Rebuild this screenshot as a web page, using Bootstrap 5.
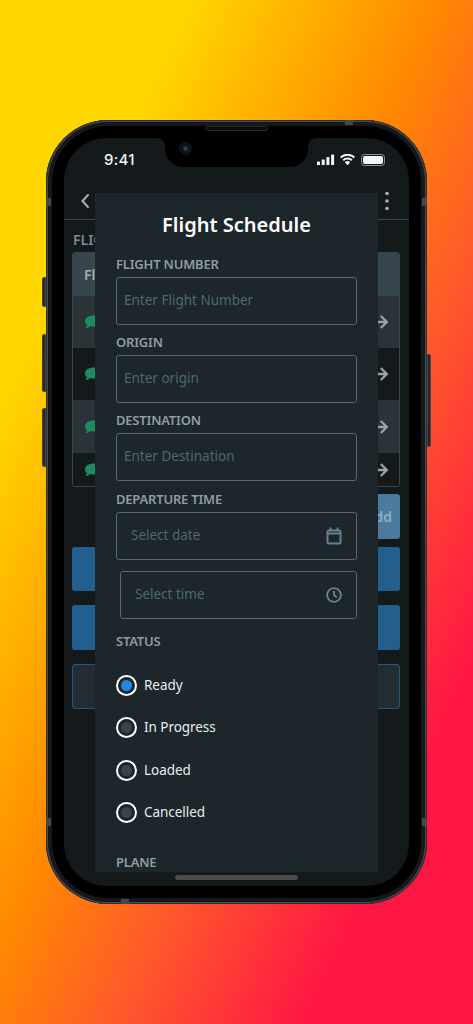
<!DOCTYPE html>
<html lang="en">
<head>
<meta charset="utf-8">
<title>Flight Schedule</title>
<link rel="stylesheet" href="https://cdn.jsdelivr.net/npm/bootstrap@5.3.0/dist/css/bootstrap.min.css">
<style>
html,body{height:1024px;overflow:hidden}
body{background:linear-gradient(to bottom right,#ffd600 20%,#ff8a00 46%,#ff5a2a 62%,#ff1744 82%);font-family:"Noto Sans","Open Sans",sans-serif;padding-top:120px}
.handset{width:381px;height:784px;border-radius:62px;background:#000;box-shadow:inset 0 0 0 1px #2e3034,inset 0 0 0 2px #4a4c50,inset 0 0 0 6px #17181b;padding:18px;position:relative}
.side-key{position:absolute;width:4px;background:#26282c;border:1px solid #44464b}
.key-a{left:-4px;top:157px;height:30px;border-radius:2px 0 0 2px}
.key-b{left:-4px;top:214px;height:58px;border-radius:2px 0 0 2px}
.key-c{left:-4px;top:288px;height:59px;border-radius:2px 0 0 2px}
.key-d{right:-4px;top:234px;height:93px;border-radius:0 2px 2px 0}
.band{position:absolute;background:#45484e}
.band-t{left:299px;top:0;width:8px;height:5px}
.band-b{left:75px;bottom:0;width:8px;height:5px}
.band-l1{left:0;top:78px;width:5px;height:8px}
.band-r1{right:0;top:78px;width:5px;height:8px}
.band-l2{left:0;top:698px;width:5px;height:8px}
.band-r2{right:0;top:698px;width:5px;height:8px}
.speaker{position:absolute;left:159px;top:6px;width:63px;height:5px;border-radius:3px;background:#0a0a0b;border:1px solid #2a2b2e}
.display{height:748px;border-radius:42px;background:#14191c;overflow:hidden;position:relative;color:#fff}
.cutout{position:absolute;left:101px;top:0;width:143px;height:29px;background:#000;border-radius:0 0 18px 18px}
.cutout::before,.cutout::after{content:"";position:absolute;top:0;width:8px;height:8px}
.cutout::before{left:-8px;background:radial-gradient(circle at 0 100%,transparent 7.5px,#000 8px)}
.cutout::after{right:-8px;background:radial-gradient(circle at 100% 100%,transparent 7.5px,#000 8px)}
.lens{position:absolute;left:14px;top:4px;width:13px;height:13px;border-radius:50%;background:radial-gradient(circle,#26405a 0 1.500px,#0e1316 3px)}
.status-row{height:44px;padding:10px 24px 0 40px}
.clock{font-family:"Inter",sans-serif;font-size:15px;font-weight:500;letter-spacing:.3px;color:#f2f4f4;line-height:24px}
.status-ico{margin-top:6px}
.top-row{height:38px;border-bottom:1px solid #3b4448;padding:0 19px 0 16px}
.head-label{font-size:14px;font-weight:600;color:#7d8c94;line-height:20px;margin:10px 0 2px 9px}
.sched-card{margin:0 9px 0 8px;height:235px;background:#14191c;border:1px solid #37464d;border-radius:3px;overflow:hidden}
.sched-head{height:44px;background:#37464d;color:#a3afb5;font-weight:600;font-size:14px;padding-left:11px}
.sched-row{padding:0 11px;flex:none}
.row-a{height:52px;background:#293338}
.row-b{height:52px;background:#14191c}
.row-c{height:53px;background:#293338}
.row-d{height:33px;background:#14191c}
.add-wrap{margin:7px 9px 8px 8px;height:45px}
.add-btn{width:60px;height:45px;background:#4a7a9e;border:0;border-radius:3px;color:#93adc2;font-size:14px;font-weight:600;padding:0 8px 0 0;text-align:right}
.wide-btn{display:block;width:328px;height:44px;margin:0 0 14px 8px;background:#225e8e;border:0;border-radius:3px}
.wide-btn.h45{height:45px}
.line-btn{background:#232c30;border:1px solid #235780}
.sheet{position:absolute;left:31px;top:55px;width:283px;height:679px;background:#1c262b;padding:17px 21px 0;overflow:hidden}
.sheet-title{font-size:20px;font-weight:600;line-height:30px;text-align:center;margin:0 0 14px;color:#fff}
.fld-label{display:block;font-size:13px;font-weight:600;letter-spacing:-.2px;line-height:20px;color:#8e9da5;margin:0 0 3px;text-transform:uppercase}
.form-control.fld-in{height:48px;background:transparent;border:1px solid #4e6d7c;border-radius:3px;padding:0 7px 2px;color:#fff;font-size:13.5px;box-shadow:none}
.fld-in::placeholder{color:#4f6875;opacity:1}
.gap-a{margin-top:7px}
.gap-b{margin-top:8px}
.picker{height:48px;border:1px solid #4e6d7c;border-radius:3px;padding:0 14px}
.picker .form-control.fld-in{border:0;padding:0 0 2px;height:46px}
.picker-b{margin:11px 0 0 4px}
.gap-c{margin-top:12px}
.radio-set{margin-top:13px}
.radio-row{height:42.5px;padding:0;margin:0;min-height:0}
.form-check-input.pick-dot{width:21px;height:21px;margin:0 7px 0 0;float:none;flex:none;border:2px solid #fff;padding:3px;background-clip:content-box;background-color:#37464d;background-image:none;box-shadow:none}
.form-check-input.pick-dot:checked{background-color:#1e88e5;border-color:#fff;background-image:none}
.radio-row .form-check-label{font-size:13.5px;letter-spacing:-.05px;color:#e8ecee;line-height:21px}
.gap-d{margin-top:17.5px}
.home-bar{position:absolute;left:111px;top:737px;width:123px;height:5px;border-radius:3px;background:#4a4b4c}
</style>
</head>
<body class="m-0">
<div class="handset mx-auto">
  <span class="side-key key-a"></span><span class="side-key key-b"></span><span class="side-key key-c"></span><span class="side-key key-d"></span>
  <span class="band band-t"></span><span class="band band-b"></span><span class="band band-l1"></span><span class="band band-r1"></span><span class="band band-l2"></span><span class="band band-r2"></span>
  <span class="speaker"></span>
  <div class="display">
    <div class="status-row d-flex justify-content-between align-items-start">
      <span class="clock">9:41</span>
      <svg width="68" height="12" viewBox="0 0 68 12" class="status-ico" aria-hidden="true">
        <g fill="#f4f5f5">
          <rect x="0" y="7.5" width="3" height="3.5" rx=".6"/><rect x="4.7" y="5.5" width="3" height="5.5" rx=".6"/><rect x="9.4" y="3" width="3" height="8" rx=".6"/><rect x="14.1" y="0.5" width="3" height="10.5" rx=".6"/>
          <path d="M30.5 11.200l-2.700-2.900a4 4 0 0 1 5.400 0z"/>
          <rect x="46" y="2" width="20" height="8" rx="2"/>
          <path d="M67.500 4.600c.8.3.8 3 0 3.300z" opacity=".6"/>
        </g>
        <g fill="none" stroke="#f4f5f5" stroke-width="1.900">
          <path d="M26.200 6.200a6.200 6.200 0 0 1 8.600 0"/><path d="M23.600 3.500a9.900 9.900 0 0 1 13.800 0"/>
        </g>
        <rect x="44.500" y=".5" width="23" height="11" rx="3" fill="none" stroke="#8d9092"/>
      </svg>
    </div>
    <div class="top-row d-flex justify-content-between align-items-center">
      <svg width="10" height="16" viewBox="0 0 10 16" aria-hidden="true"><path d="M8 2L2.500 8 8 14" fill="none" stroke="#a9aeb1" stroke-width="2" stroke-linecap="round"/></svg>
      <svg width="6" height="20" viewBox="0 0 6 20" aria-hidden="true"><g fill="#a9aeb1"><circle cx="3" cy="2.500" r="1.800"/><circle cx="3" cy="10" r="1.800"/><circle cx="3" cy="17.500" r="1.800"/></g></svg>
    </div>
    <div class="head-label">FLIGHTS</div>
    <div class="sched-card d-flex flex-column">
      <div class="sched-head d-flex align-items-center">Flight</div>
      <div class="sched-row row-a d-flex justify-content-between align-items-center">
        <svg width="17" height="14" viewBox="0 0 17 14" aria-hidden="true"><path d="M9.500.5c4 0 7 2.200 7 5.500s-3 5.500-7 5.500c-1.100 0-2.200-.2-3.100-.5-1.200 1.100-3 2-5.400 2.100 1-.8 1.700-1.900 1.800-3.300C1.500 9.200 1 7.700 1 6c0-3.300 4.500-5.500 8.500-5.500z" fill="#1e8a60"/></svg>
        <svg width="14" height="14" viewBox="0 0 14 14" aria-hidden="true"><path d="M0 7h12.500M6.800 1l6 6-6 6" fill="none" stroke="#9aa2a6" stroke-width="2.300"/></svg>
      </div>
      <div class="sched-row row-b d-flex justify-content-between align-items-center">
        <svg width="17" height="14" viewBox="0 0 17 14" aria-hidden="true"><path d="M9.500.5c4 0 7 2.200 7 5.500s-3 5.500-7 5.500c-1.100 0-2.200-.2-3.100-.5-1.200 1.100-3 2-5.400 2.100 1-.8 1.700-1.900 1.800-3.300C1.500 9.200 1 7.700 1 6c0-3.300 4.500-5.500 8.500-5.500z" fill="#1e8a60"/></svg>
        <svg width="14" height="14" viewBox="0 0 14 14" aria-hidden="true"><path d="M0 7h12.500M6.800 1l6 6-6 6" fill="none" stroke="#9aa2a6" stroke-width="2.300"/></svg>
      </div>
      <div class="sched-row row-c d-flex justify-content-between align-items-center">
        <svg width="17" height="14" viewBox="0 0 17 14" aria-hidden="true"><path d="M9.500.5c4 0 7 2.200 7 5.500s-3 5.500-7 5.500c-1.100 0-2.200-.2-3.100-.5-1.200 1.100-3 2-5.400 2.100 1-.8 1.700-1.900 1.800-3.300C1.500 9.200 1 7.700 1 6c0-3.300 4.500-5.500 8.500-5.500z" fill="#1e8a60"/></svg>
        <svg width="14" height="14" viewBox="0 0 14 14" aria-hidden="true"><path d="M0 7h12.500M6.800 1l6 6-6 6" fill="none" stroke="#9aa2a6" stroke-width="2.300"/></svg>
      </div>
      <div class="sched-row row-d d-flex justify-content-between align-items-center">
        <svg width="17" height="14" viewBox="0 0 17 14" aria-hidden="true"><path d="M9.500.5c4 0 7 2.200 7 5.500s-3 5.500-7 5.500c-1.100 0-2.200-.2-3.100-.5-1.200 1.100-3 2-5.400 2.100 1-.8 1.700-1.900 1.800-3.300C1.500 9.200 1 7.700 1 6c0-3.300 4.500-5.500 8.500-5.500z" fill="#1e8a60"/></svg>
        <svg width="14" height="14" viewBox="0 0 14 14" aria-hidden="true"><path d="M0 7h12.500M6.800 1l6 6-6 6" fill="none" stroke="#9aa2a6" stroke-width="2.300"/></svg>
      </div>
    </div>
    <div class="add-wrap d-flex justify-content-end"><button type="button" class="btn add-btn">Add</button></div>
    <button type="button" class="btn wide-btn" aria-label="Action"></button>
    <button type="button" class="btn wide-btn h45" aria-label="Action"></button>
    <button type="button" class="btn wide-btn h45 line-btn" aria-label="Action"></button>

    <span class="cutout"><span class="lens"></span></span>

    <form class="sheet">
      <h1 class="sheet-title">Flight Schedule</h1>
      <label class="fld-label" for="f1">Flight Number</label>
      <input id="f1" class="form-control fld-in" placeholder="Enter Flight Number">
      <label class="fld-label gap-a" for="f2">Origin</label>
      <input id="f2" class="form-control fld-in" placeholder="Enter origin">
      <label class="fld-label gap-a" for="f3">Destination</label>
      <input id="f3" class="form-control fld-in" placeholder="Enter Destination">
      <label class="fld-label gap-b" for="f4">Departure Time</label>
      <div class="picker d-flex align-items-center">
        <input id="f4" class="form-control fld-in" placeholder="Select date">
        <svg width="16" height="18" viewBox="0 0 16 18" class="flex-shrink-0" aria-hidden="true"><g fill="none" stroke="#64838f" stroke-width="2"><rect x="1.500" y="3.500" width="13" height="13" rx="1.500"/><path d="M1.500 6.500h13M4.500 .5v3M11.500 .5v3"/></g></svg>
      </div>
      <div class="picker picker-b d-flex align-items-center">
        <input id="f5" class="form-control fld-in" placeholder="Select time" aria-label="Select time">
        <svg width="16" height="16" viewBox="0 0 16 16" class="flex-shrink-0" aria-hidden="true"><g fill="none" stroke="#64838f" stroke-width="1.900"><circle cx="8" cy="8" r="6.900"/><path d="M8 3.800V8l2.800 2.200"/></g></svg>
      </div>
      <div class="fld-label gap-c mb-0">Status</div>
      <div class="radio-set">
        <div class="form-check radio-row d-flex align-items-center"><input class="form-check-input pick-dot" type="radio" name="st" id="r1" checked><label class="form-check-label" for="r1">Ready</label></div>
        <div class="form-check radio-row d-flex align-items-center"><input class="form-check-input pick-dot" type="radio" name="st" id="r2"><label class="form-check-label" for="r2">In Progress</label></div>
        <div class="form-check radio-row d-flex align-items-center"><input class="form-check-input pick-dot" type="radio" name="st" id="r3"><label class="form-check-label" for="r3">Loaded</label></div>
        <div class="form-check radio-row d-flex align-items-center"><input class="form-check-input pick-dot" type="radio" name="st" id="r4"><label class="form-check-label" for="r4">Cancelled</label></div>
      </div>
      <div class="fld-label gap-d mb-0">Plane</div>
    </form>
    <span class="home-bar"></span>
  </div>
</div>
<script src="https://cdn.jsdelivr.net/npm/bootstrap@5.3.0/dist/js/bootstrap.bundle.min.js"></script>
</body>
</html>
